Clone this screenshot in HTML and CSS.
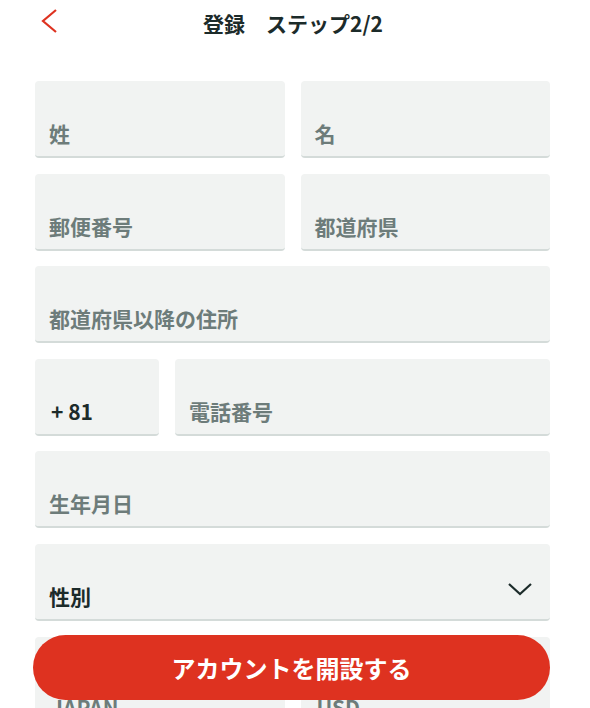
FILE: index.html
```html
<!DOCTYPE html>
<html lang="ja">
<head>
  <meta charset="UTF-8" />
  <title>登録 ステップ2/2</title>
  <link rel="stylesheet" href="styles.css">
</head>
<body>

  <header class="topbar">
    <a class="back" href="#">
      <svg width="22" height="28" viewBox="0 0 22 28"><path d="M18 2 L5 13 L18 24" fill="none" stroke="#de3220" stroke-width="2.2"/></svg>
    </a>
    <h1>登録　ステップ2/2</h1>
  </header>

  <form class="signup">
    <div class="row half">
      <div class="field"><span class="hint">姓</span></div>
      <div class="field"><span class="hint">名</span></div>
    </div>
    <div class="row half">
      <div class="field"><span class="hint">郵便番号</span></div>
      <div class="field"><span class="hint">都道府県</span></div>
    </div>
    <div class="row">
      <div class="field"><span class="hint">都道府県以降の住所</span></div>
    </div>
    <div class="row phone">
      <div class="field"><span class="value code">+ 81</span></div>
      <div class="field"><span class="hint">電話番号</span></div>
    </div>
    <div class="row">
      <div class="field"><span class="hint">生年月日</span></div>
    </div>
    <div class="row">
      <div class="field select">
        <span class="value">性別</span>
        <svg width="26" height="16" viewBox="0 0 26 16"><path d="M2 3 L13 13 L24 3" fill="none" stroke="#1c2b2a" stroke-width="2.2"/></svg>
      </div>
    </div>
    <div class="row half tall">
      <div class="field"><span class="hint">JAPAN</span></div>
      <div class="field"><span class="hint">USD</span></div>
    </div>
  </form>

  <button class="submit" type="submit">アカウントを開設する</button>

</body>
</html>
```

FILE: styles.css
```css
body {
  margin: 0;
  font-family: "Noto Sans CJK JP", "Noto Sans", sans-serif;
  background: #ffffff;
  color: #1c2b2a;
}

.topbar {
  position: relative;
  height: 45px;
  display: flex;
  align-items: center;
  justify-content: center;
}

.back {
  position: absolute;
  left: 38px;
  top: 8px;
}

.topbar h1 {
  margin: 0 0 0 -4px;
  font-size: 21px;
  font-weight: bold;
  color: #1c2b2a;
}

.signup {
  margin: 36px 40px 0 35px;
  display: flex;
  flex-direction: column;
  gap: 15.6px;
}

.row {
  display: flex;
  gap: 16px;
}

.half .field {
  flex: 1;
}

.phone .field:first-child {
  flex: 0 0 124px;
}

.field {
  flex: 1;
  box-sizing: border-box;
  height: 77px;
  background: #f1f3f2;
  border-bottom: 2px solid #d4dbd9;
  border-radius: 4px;
  display: flex;
  align-items: flex-end;
  justify-content: space-between;
  padding: 0 15px 12px 14px;
  line-height: 1;
}

/* last row sits under the button, only its top shows */
.tall .field {
  height: 95px;
  padding-left: 16px;
}

.hint {
  font-size: 21px;
  font-weight: bold;
  color: #6d7c7a;
}

.value {
  font-size: 21px;
  font-weight: bold;
  color: #1c2b2a;
}

.code {
  padding-left: 2px;
}

.select svg {
  margin: 0 2px 10px 0;
}

.submit {
  position: fixed;
  left: 33px;
  bottom: 8px;
  width: 517px;
  height: 65px;
  border: none;
  border-radius: 33px;
  background-color: #de3220;
  color: #ffffff;
  font-family: "Noto Sans CJK JP", sans-serif;
  font-size: 24px;
  font-weight: bold;
  cursor: pointer;
}
```
